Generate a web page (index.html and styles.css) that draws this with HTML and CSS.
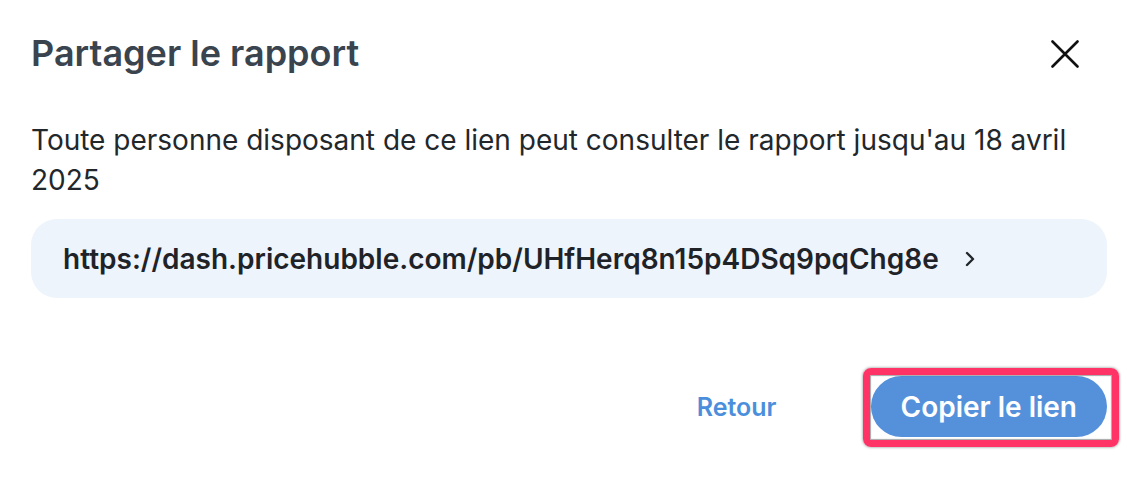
FILE: index.html
```html
<!DOCTYPE html>
<html lang="fr">
<head>
<meta charset="utf-8">
<title>Partager le rapport</title>
<link rel="stylesheet" href="styles.css">
</head>
<body>
<div class="dialog">
  <header class="head">
    <h1 class="title">Partager le rapport</h1>
    <button class="close" aria-label="Fermer">
      <svg width="28" height="28" viewBox="0 0 28 28"><path d="M1.5 1.5 L26.5 26.5 M26.5 1.5 L1.5 26.5" stroke="#111" stroke-width="2.6" stroke-linecap="round" fill="none"/></svg>
    </button>
  </header>
  <p class="desc">Toute personne disposant de ce lien peut consulter le rapport jusqu'au 18 avril 2025</p>
  <div class="link">
    <span class="url">https://dash.pricehubble.com/pb/UHfHerq8n15p4DSq9pqChg8e</span>
    <svg class="chev" width="10" height="16" viewBox="0 0 10 16"><path d="M2 2 L8 8 L2 14" stroke="#23272b" stroke-width="2.4" stroke-linecap="round" stroke-linejoin="round" fill="none"/></svg>
  </div>
  <footer class="actions">
    <button class="back">Retour</button>
    <div class="copy-wrap">
      <button class="copy">Copier le lien</button>
      <span class="highlight"></span>
    </div>
  </footer>
</div>
</body>
</html>
```
FILE: styles.css
```css
* { box-sizing: border-box; }
html, body { margin: 0; padding: 0; background: #fff; }
body { font-family: Inter, "Noto Sans", sans-serif; }
.dialog { padding: 0 31px 40px; display: flex; flex-direction: column; }
.head { display: flex; justify-content: space-between; align-items: flex-start; padding-top: 31px; }
.title { margin: 0; font-size: 36px; line-height: 44px; font-weight: 600; color: #3a444e; }
.close { margin: 9px 28px 0 0; padding: 0; border: 0; background: none; width: 28px; height: 28px; display: block; }
.close svg { display: block; }
.desc { margin: 45px 0 0; font-size: 28px; line-height: 40px; color: #22272b; font-weight: 400; }
.link { margin-top: 19px; height: 79px; background: #edf4fc; border-radius: 26px; display: flex; align-items: center; padding-left: 32px; }
.url { font-size: 28px; font-weight: 600; color: #1f2328; }
.chev { margin-left: 26px; display: block; }
.actions { margin-top: 78px; display: flex; justify-content: flex-end; align-items: center; gap: 94px; }
.back { border: 0; background: none; padding: 0; font-family: inherit; font-size: 25px; font-weight: 600; color: #4b8fdc; }
.copy-wrap { position: relative; }
.copy { display: block; height: 61px; padding: 0 30px; border: 0; border-radius: 31px; background: #5591db; color: #fff; font-family: inherit; font-size: 28px; font-weight: 600; }
.highlight { position: absolute; top: -8px; left: -8px; right: -12px; bottom: -10px; border: 7px solid #ff3366; border-radius: 8px; box-shadow: 0 0 3px rgba(0,0,0,0.5), inset 0 0 1px 1px rgba(0,0,0,0.35); pointer-events: none; }
```
